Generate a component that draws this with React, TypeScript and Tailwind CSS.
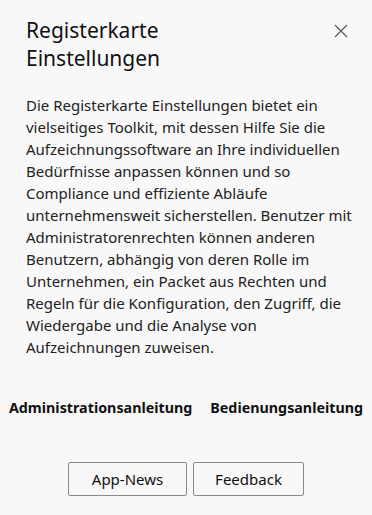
import React from "react";

const FONT = { fontFamily: '"Noto Sans", "Open Sans", sans-serif' };

export default function App() {
  return (
    <div className="h-[515px] w-[372px] overflow-hidden bg-[#f8f8f8] text-[#1b1b1b]" style={FONT}>
      {/* Header */}
      <div className="flex items-start justify-between pl-[26px] pr-[24px] pt-[16px]">
        <h1 className="text-[21px] leading-[28px] font-normal text-[#111]">
          Registerkarte
          <br />
          Einstellungen
        </h1>
        <button className="mt-[8px] text-[#555]" aria-label="Schließen">
          <svg width="14" height="14" viewBox="0 0 14 14" fill="none" stroke="currentColor" strokeWidth="1.1">
            <path d="M1 1 L13 13 M13 1 L1 13" />
          </svg>
        </button>
      </div>

      {/* Body */}
      <p className="mt-[22px] pl-[26px] pr-[20px] text-[15px] leading-[22px] text-[#222]">
        Die Registerkarte Einstellungen bietet ein vielseitiges Toolkit, mit dessen Hilfe Sie die
        Aufzeichnungssoftware an Ihre individuellen Bedürfnisse anpassen können und so Compliance
        und effiziente Abläufe unternehmensweit sicherstellen. Benutzer mit Administratorenrechten
        können anderen Benutzern, abhängig von deren Rolle im Unternehmen, ein Packet aus Rechten
        und Regeln für die Konfiguration, den Zugriff, die Wiedergabe und die Analyse von
        Aufzeichnungen zuweisen.
      </p>

      {/* Links */}
      <div className="mt-[40px] flex justify-center gap-[18px] text-[14.3px] leading-[20px] font-bold text-[#111]">
        <a href="#" className="whitespace-nowrap">Administrationsanleitung</a>
        <a href="#" className="whitespace-nowrap">Bedienungsanleitung</a>
      </div>

      {/* Buttons */}
      <div className="mt-[44px] flex justify-center gap-[6px]">
        <button className="h-[34px] w-[119px] rounded-[2px] border border-[#8a8a8a] bg-[#f8f8f8] text-[15px] text-[#111]">
          App-News
        </button>
        <button className="h-[34px] w-[111px] rounded-[2px] border border-[#8a8a8a] bg-[#f8f8f8] text-[15px] text-[#111]">
          Feedback
        </button>
      </div>
    </div>
  );
}
